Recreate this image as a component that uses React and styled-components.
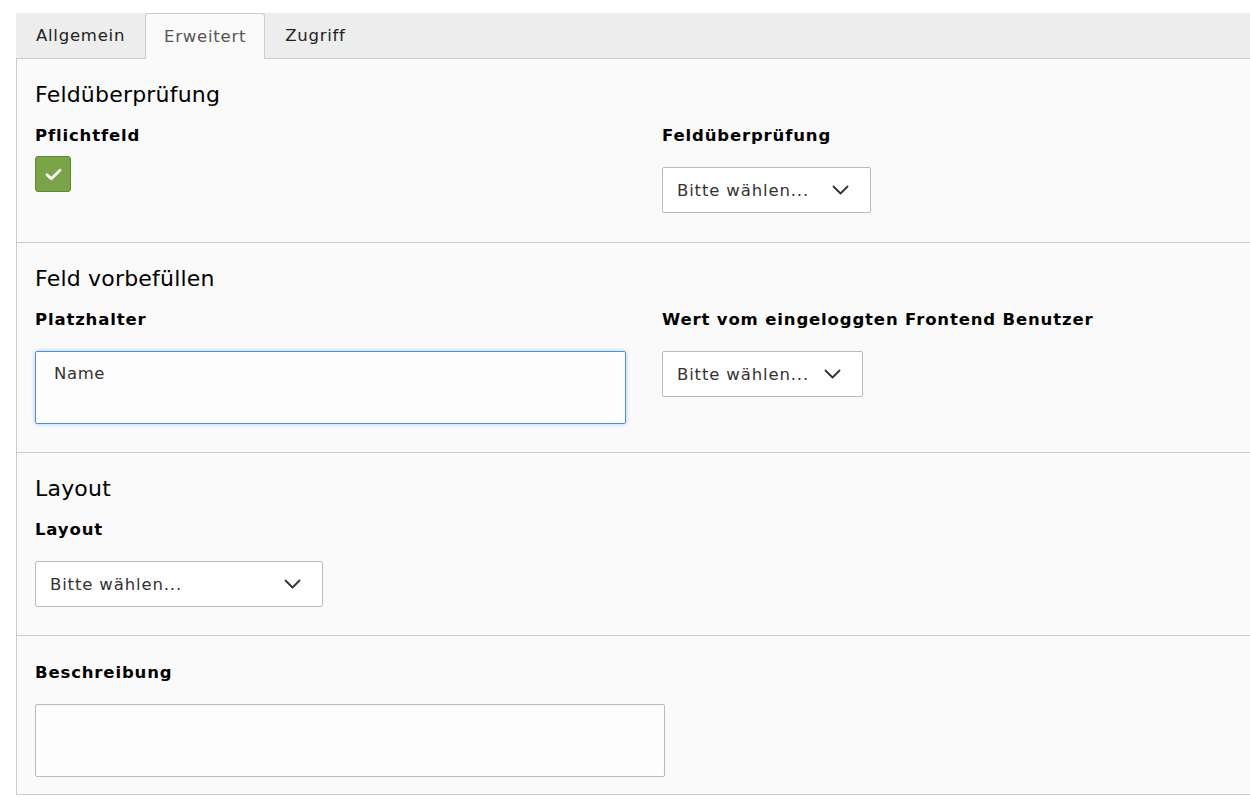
import styled, { createGlobalStyle } from 'styled-components';

const GlobalStyle = createGlobalStyle`
    html, body {
        margin: 0;
        padding: 0;
        background: #fff;
        overflow: hidden;
    }
    body {
        font-family: "DejaVu Sans", Verdana, sans-serif;
        color: #000;
    }
    * {
        box-sizing: border-box;
    }
`;

const ChevronDown = () => (
    <svg width="17" height="10" viewBox="0 0 17 10" fill="none">
        <path d="M1.5 1.5 L8.5 8.5 L15.5 1.5" stroke="#333" strokeWidth="1.8" strokeLinecap="round" strokeLinejoin="round"/>
    </svg>
);

const CheckMark = () => (
    <svg width="17" height="13" viewBox="0 0 17 13" fill="none">
        <path d="M2 6.8 L6.3 10.8 L15 2.2" stroke="#fff" strokeWidth="2.8" strokeLinecap="round" strokeLinejoin="round"/>
    </svg>
);

const Select = ({ width }) => (
    <SelectBox $width={width}>
        <SelectText>Bitte wählen...</SelectText>
        <ChevronDown/>
    </SelectBox>
);

const App = () => {
    const tabs = ["Allgemein", "Erweitert", "Zugriff"];

    return (
        <>
            <GlobalStyle/>
            <Page>
                <TabBar>
                    {tabs.map((tab) => (
                        <Tab key={tab} $active={tab === "Erweitert"}>{tab}</Tab>
                    ))}
                </TabBar>
                <Panel>
                    <Section>
                        <Heading>Feldüberprüfung</Heading>
                        <Row>
                            <Field>
                                <Label>Pflichtfeld</Label>
                                <Checkbox>
                                    <CheckMark/>
                                </Checkbox>
                            </Field>
                            <Field>
                                <Label>Feldüberprüfung</Label>
                                <Select width={209}/>
                            </Field>
                        </Row>
                    </Section>

                    <Section>
                        <Heading>Feld vorbefüllen</Heading>
                        <Row>
                            <Field>
                                <Label>Platzhalter</Label>
                                <TextArea $focused defaultValue="Name"/>
                            </Field>
                            <Field>
                                <Label>Wert vom eingeloggten Frontend Benutzer</Label>
                                <Select width={201}/>
                            </Field>
                        </Row>
                    </Section>

                    <Section>
                        <Heading>Layout</Heading>
                        <Field>
                            <Label>Layout</Label>
                            <Select width={288}/>
                        </Field>
                    </Section>

                    <Section $last>
                        <Field>
                            <Label>Beschreibung</Label>
                            <TextArea $width={630}/>
                        </Field>
                    </Section>
                </Panel>
            </Page>
        </>
    );
}

const Page = styled.div`
    padding: 13px 0 0 16px;
    width: 1320px;
`;

const TabBar = styled.div`
    display: flex;
    height: 46px;
    background-color: #ededed;
    border-bottom: 1px solid #ccc;
`;

const Tab = styled.div`
    display: flex;
    align-items: center;
    height: ${(p) => (p.$active ? "46px" : "45px")};
    padding: 0 ${(p) => (p.$active ? "18px" : "20px")};
    font-size: 16.5px;
    letter-spacing: 0.75px;
    color: ${(p) => (p.$active ? "#555" : "#222")};
    background-color: ${(p) => (p.$active ? "#fafafa" : "transparent")};
    border: ${(p) => (p.$active ? "1px solid #ccc" : "none")};
    border-bottom: none;
    border-radius: 3px 3px 0 0;
    margin-bottom: ${(p) => (p.$active ? "-1px" : "0")};
`;

const Panel = styled.div`
    background-color: #fafafa;
    border-left: 1px solid #ccc;
    border-bottom: 1px solid #ccc;
`;

const Section = styled.section`
    padding: ${(p) => (p.$last ? "27px 18px 17px" : "24px 18px 28px")};
    border-bottom: ${(p) => (p.$last ? "none" : "1px solid #ccc")};

    &:first-child {
        padding-bottom: 29px;
    }
`;

const Heading = styled.h2`
    margin: 0 0 19px;
    font-size: 22px;
    font-weight: normal;
    line-height: 24px;
    letter-spacing: 0.2px;
    color: #000;
`;

const Row = styled.div`
    display: grid;
    grid-template-columns: 591px 1fr;
    column-gap: 36px;
`;

const Field = styled.div`
    display: flex;
    flex-direction: column;
    align-items: flex-start;
`;

const Label = styled.label`
    display: block;
    margin-bottom: 21px;
    font-size: 16.5px;
    font-weight: bold;
    line-height: 20px;
    letter-spacing: 0.85px;
    color: #000;
    white-space: nowrap;
`;

const Checkbox = styled.div`
    display: flex;
    align-items: center;
    justify-content: center;
    width: 36px;
    height: 36px;
    margin-top: -11px;
    background-color: #79a548;
    border: 1px solid #5e8a33;
    border-radius: 3px;
`;

const SelectBox = styled.div`
    display: flex;
    align-items: center;
    justify-content: space-between;
    width: ${(p) => p.$width}px;
    height: 46px;
    padding: 0 21px 0 14px;
    background-color: #fff;
    border: 1px solid #bbb;
    border-radius: 2px;
`;

const SelectText = styled.span`
    font-size: 16.5px;
    letter-spacing: 0.85px;
    color: #333;
`;

const TextArea = styled.textarea`
    display: block;
    width: ${(p) => (p.$width ? `${p.$width}px` : "100%")};
    height: 73px;
    padding: 12px 18px;
    font-family: "DejaVu Sans", Verdana, sans-serif;
    font-size: 16.5px;
    letter-spacing: 0.6px;
    color: #333;
    resize: none;
    outline: none;
    background-color: #fdfdfd;
    border: 1px solid ${(p) => (p.$focused ? "#4a90e2" : "#bbb")};
    border-radius: 2px;
    box-shadow: ${(p) => (p.$focused ? "0 0 4px rgba(74, 144, 226, 0.45)" : "inset 0 1px 1px rgba(0, 0, 0, 0.04)")};
`;

export default App;
